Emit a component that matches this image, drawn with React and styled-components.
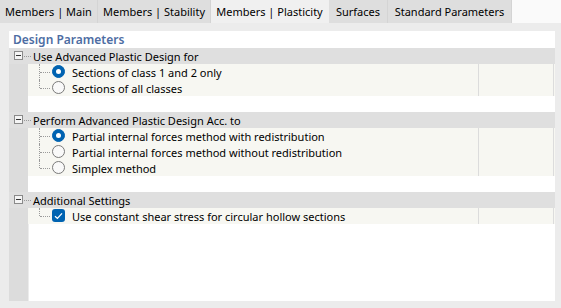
import React from 'react'
import styled, { createGlobalStyle } from 'styled-components'

const Global = createGlobalStyle`
  html, body { margin: 0; padding: 0; }
  body {
    width: 561px;
    height: 308px;
    overflow: hidden;
    background: #ececec;
    font-family: "Noto Sans", "Open Sans", sans-serif;
    font-size: 11px;
    color: #000;
  }
`;

const Window = styled.div`
  width: 561px;
  height: 308px;
  display: flex;
  flex-direction: column;
`;

const TabBar = styled.div`
  display: flex;
  height: 23px;
  background: #fafafa;
`;

const Tab = styled.div`
  width: ${p => p.w}px;
  height: 23px;
  display: flex;
  align-items: center;
  justify-content: center;
  background: ${p => (p.active ? '#f0f0f0' : '#dedede')};
  border-right: 1px solid ${p => (p.active ? '#f0f0f0' : '#d4d4d4')};
  white-space: nowrap;
  box-sizing: border-box;
`;

const Panel = styled.div`
  flex: 1;
  display: flex;
  padding: 8px 6px 7px 9px;
  background: #ececec;
`;

const Sheet = styled.div`
  flex: 1;
  display: flex;
  flex-direction: column;
  background: #fff;
`;

const Title = styled.div`
  height: 17px;
  display: flex;
  align-items: center;
  padding-left: 4px;
  color: #4d6da3;
  font-size: 12px;
  font-weight: 600;
`;

const Tree = styled.div`
  flex: 1;
  display: flex;
  flex-direction: column;
  background: linear-gradient(to right, #dcdcdc 0 19px, #ececec 19px 20px, #fff 20px);
`;

const Header = styled.div`
  position: relative;
  height: 16px;
  display: flex;
  align-items: center;
  background: #dfdfdf;
  padding-left: 24px;
  &::after {
    content: '';
    position: absolute;
    left: 15px;
    top: 8px;
    width: 7px;
    border-top: 1px dotted #9a9a9a;
  }
`;

const Expander = styled.span`
  position: absolute;
  left: 5px;
  top: 3px;
  width: 9px;
  height: 9px;
  box-sizing: border-box;
  border: 1px solid #8a8a8a;
  background: #f4f4f4;
  z-index: 1;
  &::before {
    content: '';
    position: absolute;
    left: 1px;
    top: 3px;
    width: 5px;
    height: 1px;
    background: #333;
  }
`;

const Row = styled.div`
  position: relative;
  height: 16px;
  margin-left: 19px;
  display: grid;
  grid-template-columns: 450px 74px 1px;
  column-gap: 1px;
  background: ${p => (p.blank ? 'transparent' : '#dcdcdc')};
`;

const Cell = styled.div`
  background: ${p => (p.blank ? '#fff' : '#f7f7f2')};
  display: flex;
  align-items: center;
`;

const Main = styled(Cell)`
  position: relative;
  padding-left: 44px;
  &::before {
    content: '';
    position: absolute;
    left: 11px;
    top: 0;
    height: ${p => (p.last ? '8px' : '16px')};
    border-left: 1px dotted #9a9a9a;
  }
  &::after {
    content: '';
    position: absolute;
    left: 12px;
    top: 8px;
    width: 10px;
    border-top: 1px dotted #9a9a9a;
  }
`;

const Radio = styled.span`
  position: absolute;
  left: 24px;
  top: 1px;
  width: 13px;
  height: 13px;
  box-sizing: border-box;
  border-radius: 50%;
  background: ${p => (p.on ? '#0063b1' : '#f9f9f9')};
  border: 1px solid ${p => (p.on ? '#0063b1' : '#7a7a7a')};
  &::after {
    content: '';
    display: ${p => (p.on ? 'block' : 'none')};
    position: absolute;
    left: 3px;
    top: 3px;
    width: 5px;
    height: 5px;
    border-radius: 50%;
    background: #fff;
  }
`;

const Check = styled.span`
  position: absolute;
  left: 24px;
  top: 1px;
  width: 13px;
  height: 13px;
  border-radius: 3px;
  background: #0063b1;
  display: flex;
  align-items: center;
  justify-content: center;
`;

const Filler = styled.div`
  flex: 1;
`;

const Option = ({ label, kind = 'radio', on, last }) => (
  <Row>
    <Main last={last}>
      {kind === 'radio' ? (
        <Radio on={on} />
      ) : (
        <Check>
          <svg width="9" height="8" viewBox="0 0 9 8">
            <path d="M1 4.2 L3.4 6.4 L8 1.4" fill="none" stroke="#fff" strokeWidth="1.3" />
          </svg>
        </Check>
      )}
      {label}
    </Main>
    <Cell />
    <Cell />
  </Row>
);

const Blank = () => (
  <Row blank>
    <Cell blank />
    <Cell blank />
    <Cell blank />
  </Row>
);

const Section = ({ title, children }) => (
  <>
    <Header>
      <Expander />
      {title}
    </Header>
    {children}
  </>
);

const tabs = [
  { label: 'Members | Main', w: 98 },
  { label: 'Members | Stability', w: 113 },
  { label: 'Members | Plasticity', w: 118, active: true },
  { label: 'Surfaces', w: 59 },
  { label: 'Standard Parameters', w: 124 },
];

export default function App() {
  return (
    <Window>
      <Global />
      <TabBar>
        {tabs.map(t => (
          <Tab key={t.label} w={t.w} active={t.active}>{t.label}</Tab>
        ))}
      </TabBar>
      <Panel>
        <Sheet>
          <Title>Design Parameters</Title>
          <Tree>
            <Section title="Use Advanced Plastic Design for">
              <Option label="Sections of class 1 and 2 only" on />
              <Option label="Sections of all classes" last />
              <Blank />
            </Section>
            <Section title="Perform Advanced Plastic Design Acc. to">
              <Option label="Partial internal forces method with redistribution" on />
              <Option label="Partial internal forces method without redistribution" />
              <Option label="Simplex method" last />
              <Blank />
            </Section>
            <Section title="Additional Settings">
              <Option kind="check" label="Use constant shear stress for circular hollow sections" last />
            </Section>
            <Filler />
          </Tree>
        </Sheet>
      </Panel>
    </Window>
  );
}
